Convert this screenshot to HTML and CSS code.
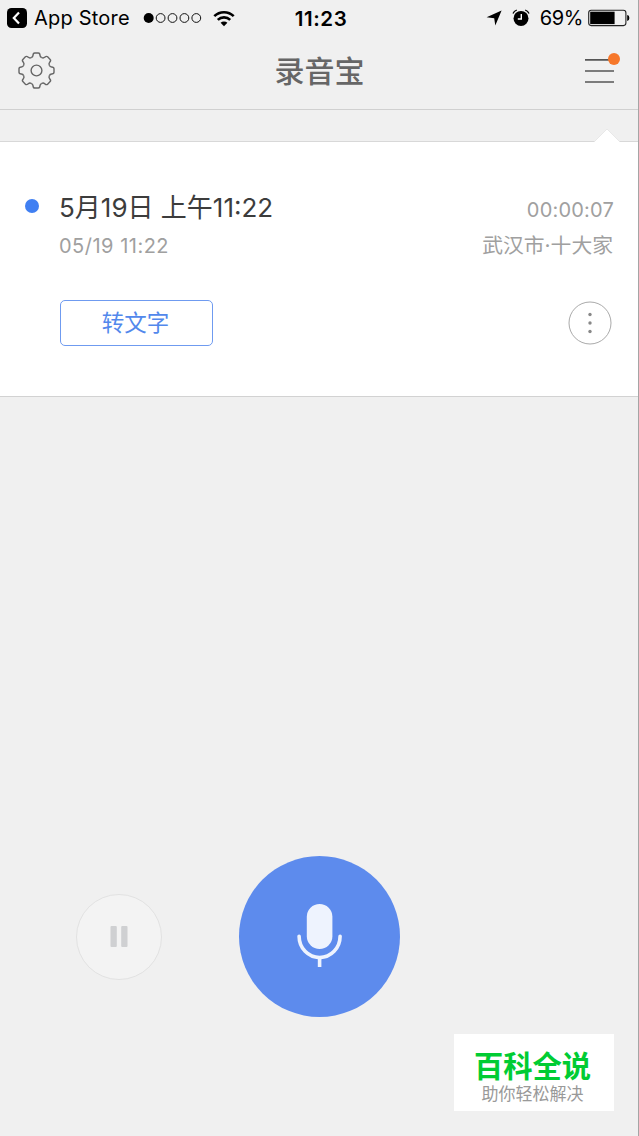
FILE: index.html
```html
<!DOCTYPE html>
<html lang="zh-CN">

<head>
  <meta charset="UTF-8" />
  <meta name="viewport" content="width=device-width, initial-scale=1.0" />
  <title>录音宝</title>
  <link rel="stylesheet" href="styles.css">
</head>

<body>
  <div class="status-bar">
    <div class="status-left">
      <svg class="back" width="20" height="20" viewBox="0 0 20 20">
        <rect width="20" height="20" rx="4.5" />
        <path d="M12 4.5 6.8 10l5.2 5.5" fill="none" stroke="#fff" stroke-width="2.2" />
      </svg>
      <span class="back-label">App Store</span>
      <svg class="signal" width="60" height="12" viewBox="0 0 60 12" fill="none" stroke="#111">
        <circle cx="5.7" cy="6" r="5" fill="#000" stroke="none" />
        <circle cx="17.6" cy="6" r="4.4" />
        <circle cx="29.5" cy="6" r="4.4" />
        <circle cx="41.4" cy="6" r="4.4" />
        <circle cx="53.3" cy="6" r="4.4" />
      </svg>
      <svg class="wifi" width="22" height="17" viewBox="0 0 22 17" fill="none" stroke="#000" stroke-width="2.6">
        <path d="M1.3 6.2a13.8 13.8 0 0 1 19.4 0" />
        <path d="M4.8 9.9a8.8 8.8 0 0 1 12.4 0" />
        <path d="M7.6 12.8a4.8 4.8 0 0 1 6.8 0L11 16.2z" fill="#000" stroke="none" />
      </svg>
    </div>
    <div class="clock">11:23</div>
    <div class="status-right">
      <svg class="location" width="16" height="16" viewBox="0 0 16 16">
        <path d="M15.6.6 9.3 15.4 8.2 8.2.6 7.2z" />
      </svg>
      <svg class="alarm" width="18" height="18" viewBox="0 0 18 18">
        <circle cx="9" cy="9.4" r="7.5" />
        <path d="M1 4.6Q2 2 4.8 1M17 4.6Q16 2 13.2 1" fill="none" stroke="#000" stroke-width="1.3" />
        <path d="M9.3 5v5H5.8" fill="none" stroke="#fff" stroke-width="1.4" />
      </svg>
      <span class="percent">69%</span>
      <svg class="battery" width="42" height="18" viewBox="0 0 42 18">
        <rect x=".7" y="1.2" width="37.2" height="15.4" rx="2.5" fill="none" stroke="#222" stroke-width="1.1" />
        <path d="M2.2 2.7h24.4v12.4H2.2z" />
        <path d="M39.2 6q2.2.2 2.2 3t-2.2 3z" />
      </svg>
    </div>
  </div>

  <header class="nav">
    <svg class="gear" width="38" height="38" viewBox="-18.5 -18.5 38 38" fill="none" stroke="#666" stroke-width="1.4">
      <defs>
        <path id="tooth" d="M-5.3-12.8Q-3.6-13.5-3.5-15.1-3.4-17.5-1.8-17.5H1.8Q3.4-17.5 3.5-15.1 3.6-13.5 5.3-12.8" />
      </defs>
      <use href="#tooth" />
      <use href="#tooth" transform="rotate(45)" />
      <use href="#tooth" transform="rotate(90)" />
      <use href="#tooth" transform="rotate(135)" />
      <use href="#tooth" transform="rotate(180)" />
      <use href="#tooth" transform="rotate(225)" />
      <use href="#tooth" transform="rotate(270)" />
      <use href="#tooth" transform="rotate(315)" />
      <circle r="5.4" />
    </svg>
    <h1>录音宝</h1>
    <svg class="menu" width="36" height="34" viewBox="0 0 36 34">
      <path d="M0 8.8h29M0 20h29M0 31h29" stroke="#555" stroke-width="1.7" />
      <circle cx="29" cy="7.9" r="6" fill="#f6772a" />
    </svg>
  </header>

  <section class="record">
    <svg class="arrow" width="28" height="15" viewBox="0 0 28 15">
      <path d="M0 15 14 1l14 14z" fill="#fff" />
      <path d="M1 14 14 1l13 13" fill="none" stroke="#e3e3e3" stroke-width=".8" />
    </svg>
    <span class="dot"></span>
    <div class="info">
      <div class="title">5月19日 上午11:22</div>
      <div class="date">05/19 11:22</div>
      <button class="convert">转文字</button>
    </div>
    <div class="meta">
      <div class="duration">00:00:07</div>
      <div class="place">武汉市·十大家</div>
      <svg class="more" width="44" height="44" viewBox="0 0 44 44">
        <circle cx="22" cy="22" r="21" fill="none" stroke="#aaa" />
        <circle cx="22" cy="13.5" r="1.7" fill="#888" />
        <circle cx="22" cy="22" r="1.7" fill="#888" />
        <circle cx="22" cy="30.5" r="1.7" fill="#888" />
      </svg>
    </div>
  </section>

  <footer class="controls">
    <div class="pause">
      <svg width="18" height="21" viewBox="0 0 18 21" fill="#cfd0d2">
        <rect x=".5" width="6.3" height="21" rx="1" />
        <rect x="11.2" width="6.3" height="21" rx="1" />
      </svg>
    </div>
    <div class="mic">
      <svg width="46" height="66" viewBox="0 0 46 66" fill="none" stroke="#eef3fe" stroke-width="3.6">
        <rect x="9.8" y="0" width="25.6" height="45" rx="12.8" fill="#eef3fe" stroke="none" />
        <path d="M2.1 32.3a20.5 21.3 0 0 0 41 0" stroke-linecap="round" />
        <path d="M22.6 54v9" />
      </svg>
    </div>
  </footer>

  <div class="brand">
    <div class="brand-name">百科全说</div>
    <div class="brand-slogan">助你轻松解决</div>
  </div>
</body>

</html>
```
FILE: styles.css
```css
* {
  box-sizing: border-box;
}

body {
  position: relative;
  display: flex;
  flex-direction: column;
  height: 1136px;
  margin: 0;
  overflow: hidden;
  border-right: 1px solid #a5a5a5;
  background-color: #f0f0f0;
  font-family: Inter, "Noto Sans CJK SC", sans-serif;
}

svg {
  display: block;
  flex-shrink: 0;
}

.status-bar {
  display: grid;
  grid-template-columns: 1fr auto 1fr;
  align-items: center;
  height: 35px;
  padding: 0 8px 0 7px;
  font-size: 20px;
  line-height: 35px;
  color: #000;
}

.status-left,
.status-right {
  display: flex;
  align-items: center;
}

.status-right {
  justify-content: flex-end;
}

.back-label {
  margin-left: 7px;
  width: 96px;
  letter-spacing: 0.2px;
  white-space: nowrap;
}

.signal {
  margin-left: 13px;
}

.wifi {
  margin-left: 10px;
}

.clock {
  padding: 1px 0 0 5px;
  font-size: 20.5px;
  font-weight: 600;
  letter-spacing: 0.6px;
}

.alarm {
  margin-left: 10px;
}

.percent {
  margin-left: 10px;
  margin-right: 5px;
  padding-top: 1px;
  letter-spacing: -0.4px;
}

.nav {
  display: flex;
  justify-content: space-between;
  align-items: center;
  height: 75px;
  padding: 0 17px 3px 18px;
  border-bottom: 1px solid #d0d0d0;
}

.nav h1 {
  margin: 0 0 0 -2px;
  font-size: 30px;
  font-weight: 500;
  line-height: 40px;
  color: #666;
}

.menu {
  margin-top: -5px;
}

.record {
  position: relative;
  display: flex;
  height: 256px;
  margin-top: 31px;
  padding: 49px 24px 0 25px;
  border-top: 1px solid #d8d8d8;
  border-bottom: 1px solid #d2d2d2;
  background-color: #fff;
}

/* tip pointing at the menu button */
.arrow {
  position: absolute;
  top: -14px;
  right: 17px;
}

.dot {
  width: 14px;
  height: 14px;
  margin-top: 8px;
  border-radius: 50%;
  background-color: #407ff2;
}

.info {
  margin-left: 21px;
}

.title {
  margin-left: -1px;
  padding-top: 1px;
  font-size: 26px;
  line-height: 32px;
  color: #3c3c3c;
}

.date {
  margin-top: 8px;
  margin-left: -1px;
  font-size: 20px;
  line-height: 28px;
  letter-spacing: 0.5px;
  color: #a0a0a0;
}

.convert {
  display: block;
  width: 153px;
  height: 46px;
  margin-top: 40px;
  padding: 0 2px 0 0;
  border: 1px solid #6f9bf0;
  border-radius: 5px;
  background: none;
  font-family: inherit;
  font-size: 22.5px;
  line-height: 44px;
  color: #5288ec;
}

.meta {
  display: flex;
  flex-direction: column;
  align-items: flex-end;
  margin-left: auto;
  color: #a0a0a0;
}

.duration {
  margin-top: 5px;
  font-size: 20px;
  line-height: 28px;
  letter-spacing: 0.2px;
}

.place {
  margin-top: 8px;
  margin-right: 1px;
  font-size: 20.8px;
  line-height: 28px;
}

.more {
  margin-top: 41px;
  margin-right: 2px;
}

.controls {
  display: flex;
  align-items: center;
  gap: 77px;
  margin: auto 0 119px 76px;
}

.pause,
.mic {
  display: flex;
  justify-content: center;
  align-items: center;
  border-radius: 50%;
}

.pause {
  width: 86px;
  height: 86px;
  border: 1px solid #e2e2e2;
  background-color: #f3f3f3;
}

.mic {
  width: 161px;
  height: 161px;
  background-color: #5d8bed;
}

.brand {
  position: absolute;
  right: 24px;
  bottom: 25px;
  width: 160px;
  height: 77px;
  padding: 15px 3px 0 0;
  background-color: #fff;
  text-align: center;
  white-space: nowrap;
}

.brand-name {
  font-size: 29.3px;
  font-weight: 700;
  line-height: 36px;
  color: #0c3;
}

.brand-slogan {
  font-size: 17px;
  line-height: 18px;
  color: #999;
}
```
